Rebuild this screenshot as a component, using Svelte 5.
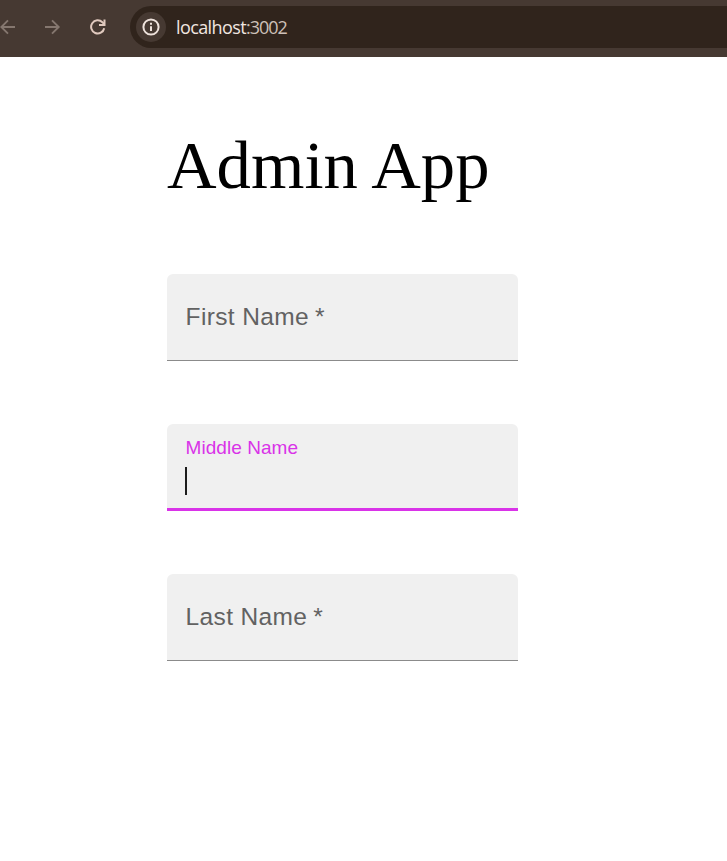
<script>
  const fields = [
    { label: 'First Name', required: true, focused: false },
    { label: 'Middle Name', required: false, focused: true },
    { label: 'Last Name', required: true, focused: false },
  ];
</script>

<div class="window">
  <header class="toolbar">
    <nav>
      <svg class="back" width="16" height="16" viewBox="0 0 16 16"><path d="M15 8H1.5M8 1.3 1.3 8 8 14.7" /></svg>
      <svg class="forward" width="16" height="16" viewBox="0 0 16 16"><path d="M0 8h13.5M7 1.3 13.7 8 7 14.7" /></svg>
      <svg class="reload" width="16" height="16" viewBox="0 0 16 16">
        <path d="M14.2 9.2A6.6 6.6 0 1 1 12.4 3.2L14 5" /><path d="M14.5 0.5v5.6H9" />
      </svg>
    </nav>
    <div class="address">
      <span class="info">
        <svg width="18" height="18" viewBox="0 0 18 18">
          <circle cx="9" cy="9" r="7.6" /><path d="M9 8.2v4.9M9 4.8v2" />
        </svg>
      </span>
      <span class="url">localhost<span class="port">:3002</span></span>
    </div>
  </header>

  <main>
    <h1>Admin App</h1>
    <form>
      {#each fields as field}
        <div class="field" class:focused={field.focused}>
          <span class="label">{field.label}{#if field.required}<span class="star">*</span>{/if}</span>
          {#if field.focused}<span class="caret"></span>{/if}
        </div>
      {/each}
    </form>
  </main>
</div>

<style>
  :global(body) {
    margin: 0;
    background: #fff;
  }
  .window {
    height: 861px;
    overflow: hidden;
  }
  .toolbar {
    display: flex;
    align-items: center;
    box-sizing: border-box;
    height: 57px;
    padding-bottom: 3px;
    background: #463932;
  }
  nav {
    display: flex;
    align-items: center;
    flex: none;
    width: 130px;
  }
  svg {
    display: block;
    fill: none;
    stroke-width: 1.9;
  }
  .back,
  .forward {
    stroke: #85776f;
  }
  .forward {
    margin-left: 29px;
  }
  .reload {
    margin-left: 29px;
    stroke: #e0c9be;
    stroke-width: 2;
  }
  .address {
    display: flex;
    align-items: center;
    flex: 1;
    box-sizing: border-box;
    height: 42px;
    padding-left: 6px;
    border-radius: 21px 0 0 21px;
    background: #30241c;
  }
  .info {
    display: grid;
    place-items: center;
    width: 30px;
    height: 30px;
    border-radius: 50%;
    background: #463932;
  }
  .info svg {
    stroke: #eee2dc;
    stroke-width: 2;
  }
  .url {
    margin-left: 10px;
    color: #f1e6e0;
    font: 18px/24px "Open Sans", "Noto Sans", sans-serif;
    letter-spacing: -0.6px;
  }
  .port {
    color: #cdc0b8;
    letter-spacing: -1px;
  }
  main {
    width: 351px;
    margin-left: 167px;
    padding-top: 68px;
  }
  h1 {
    margin: 0;
    color: #000;
    font: 400 68.7px/80px "Liberation Serif", "Times New Roman", serif;
    white-space: nowrap;
  }
  form {
    display: flex;
    flex-direction: column;
    gap: 63px;
    padding-top: 69px;
  }
  .field {
    display: flex;
    flex-direction: column;
    box-sizing: border-box;
    height: 87px;
    padding: 28px 18px 0;
    border-bottom: 1px solid #8b8b8b;
    border-radius: 6px 6px 0 0;
    background: #f0f0f0;
  }
  .label {
    padding-left: 0.6px;
    color: #626262;
    font: 24.5px/30px "Liberation Sans", Arial, sans-serif;
    letter-spacing: 0.36px;
  }
  .star {
    margin-left: 6px;
  }
  .focused {
    padding-top: 12px;
    border-bottom: 3px solid #d933e8;
  }
  .focused .label {
    color: #d933e8;
    font-size: 19px;
    line-height: 23px;
    letter-spacing: 0.05px;
  }
  .caret {
    width: 2px;
    height: 28px;
    margin-top: 8px;
    background: #1c1c1c;
  }
</style>
